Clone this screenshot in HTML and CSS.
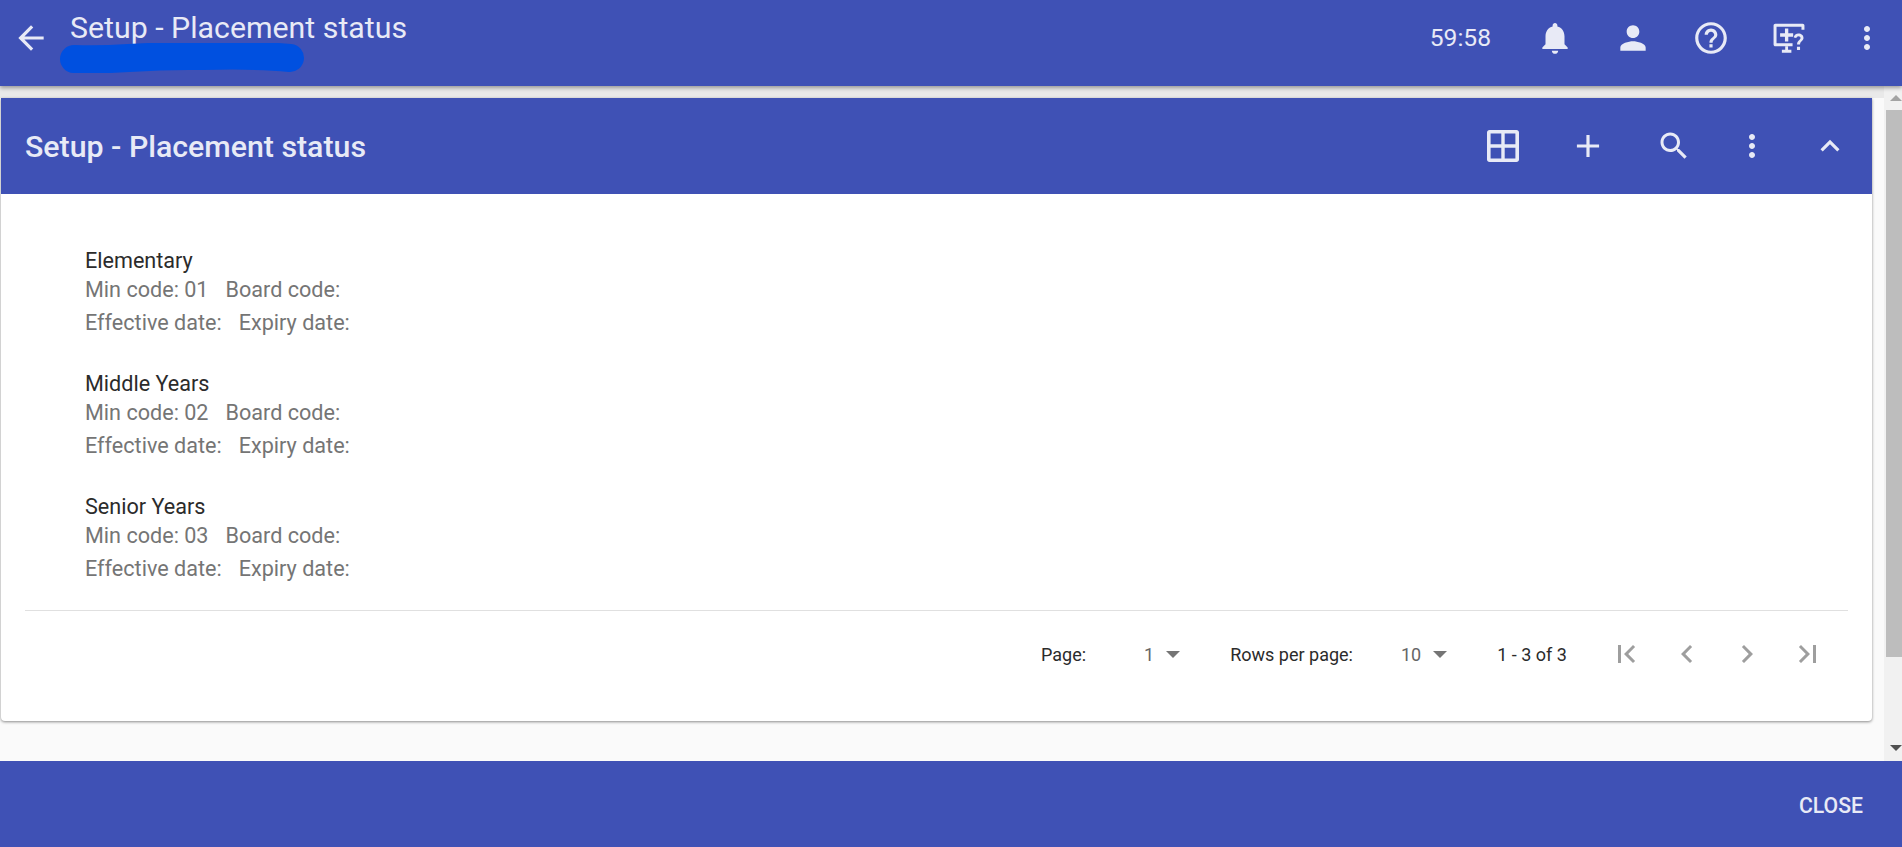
FILE: index.html
```html
<!DOCTYPE html>
<html lang="en">
<head>
  <meta charset="UTF-8">
  <meta name="viewport" content="width=device-width, initial-scale=1.0">
  <title>Setup - Placement status</title>
  <link rel="stylesheet" href="styles.css">
</head>
<body>
  <header class="app-bar">
    <button class="icon-btn back-btn" aria-label="Back">
      <svg viewBox="0 0 24 24" width="38" height="38"><path d="M20 11H7.830l5.590-5.590L12 4l-8 8 8 8 1.410-1.410L7.830 13H20v-2z"/></svg>
    </button>
    <div class="app-titles">
      <h1 class="app-title">Setup - Placement status</h1>
      <svg class="scribble" viewBox="0 0 246 30" width="246" height="30"><path d="M15 16 C60 18 70 13 130 13 C170 13 190 11 231 15" fill="none" stroke="#0050e0" stroke-width="28" stroke-linecap="round"/></svg>
    </div>
    <div class="app-actions">
      <span class="timer">59:58</span>
      <button class="icon-btn" aria-label="Notifications">
        <svg viewBox="0 0 24 24" width="38" height="38"><path d="M12 22c1.100 0 2-.9 2-2h-4c0 1.100.9 2 2 2zm6-6v-5c0-3.070-1.630-5.640-4.500-6.320V4c0-.83-.67-1.500-1.500-1.500s-1.500.67-1.500 1.500v.68C7.640 5.360 6 7.920 6 11v5l-2 2v1h16v-1l-2-2z"/></svg>
      </button>
      <button class="icon-btn" aria-label="Account">
        <svg viewBox="0 0 24 24" width="38" height="38"><path d="M12 12c2.210 0 4-1.790 4-4s-1.790-4-4-4-4 1.790-4 4 1.790 4 4 4zm0 2c-2.670 0-8 1.340-8 4v2h16v-2c0-2.660-5.330-4-8-4z"/></svg>
      </button>
      <button class="icon-btn" aria-label="Help">
        <svg viewBox="0 0 24 24" width="38" height="38"><path d="M11 18h2v-2h-2v2zm1-16C6.480 2 2 6.480 2 12s4.480 10 10 10 10-4.480 10-10S17.520 2 12 2zm0 18c-4.410 0-8-3.590-8-8s3.590-8 8-8 8 3.590 8 8-3.590 8-8 8zm0-14c-2.210 0-4 1.790-4 4h2c0-1.100.9-2 2-2s2 .9 2 2c0 2-3 1.750-3 5h2c0-2.250 3-2.500 3-5 0-2.210-1.790-4-4-4z"/></svg>
      </button>
      <button class="icon-btn" aria-label="Support">
        <svg viewBox="0 0 32 32" width="38" height="38">
          <path d="M3 5.500C3 4.700 3.700 4 4.500 4H27.500C28.300 4 29 4.700 29 5.500V9H26.500V6.500H5.500V20.500H19V23H4.500C3.700 23 3 22.300 3 21.500Z"/>
          <path d="M10 25.800H18V28.500H10ZM12.800 23H15.200V26H12.800Z"/>
          <path d="M12.600 8H15.400V12.100H19.500V14.900H15.400V19H12.600V14.900H8.500V12.100H12.600Z"/>
          <path d="M20 15.500C20.300 13.500 22 12.300 24 12.300C26.300 12.300 28.200 13.800 28.200 16C28.200 18.600 25.300 18.700 25.300 21.500H22.800C22.800 17.900 25.700 17.800 25.700 16C25.700 15.100 25 14.500 24 14.500C23 14.500 22.400 15.100 22.200 16ZM22.700 23.300H25.300V26H22.700Z"/>
        </svg>
      </button>
      <button class="icon-btn" aria-label="More">
        <svg viewBox="0 0 24 24" width="36" height="36"><path d="M12 8c1.100 0 2-.9 2-2s-.9-2-2-2-2 .9-2 2 .9 2 2 2zm0 2c-1.100 0-2 .9-2 2s.9 2 2 2 2-.9 2-2-.9-2-2-2zm0 6c-1.100 0-2 .9-2 2s.9 2 2 2 2-.9 2-2-.9-2-2-2z"/></svg>
      </button>
    </div>
  </header>

  <div class="page">
    <main class="content">
      <section class="card">
        <div class="card-head">
          <h2 class="card-title">Setup - Placement status</h2>
          <div class="card-actions">
            <button class="icon-btn columns-btn" aria-label="Columns">
              <svg viewBox="0 0 32 32" width="32" height="32"><path fill-rule="evenodd" d="M2.500 0H29.500C30.900 0 32 1.100 32 2.500V29.500C32 30.900 30.900 32 29.500 32H2.500C1.100 32 0 30.900 0 29.500V2.500C0 1.100 1.100 0 2.500 0ZM3.600 3.600V14.300H14.300V3.600ZM17.700 3.600V14.300H28.400V3.600ZM3.600 17.700V28.400H14.300V17.700ZM17.700 17.700V28.400H28.400V17.700Z"/></svg>
            </button>
            <button class="icon-btn add-btn" aria-label="Add">
              <svg viewBox="0 0 24 24" width="38" height="38"><path d="M19 13h-6v6h-2v-6H5v-2h6V5h2v6h6v2z"/></svg>
            </button>
            <button class="icon-btn" aria-label="Search">
              <svg viewBox="0 0 24 24" width="36" height="36"><path d="M15.500 14h-.79l-.28-.27C15.410 12.590 16 11.110 16 9.500 16 5.910 13.090 3 9.500 3S3 5.910 3 9.500 5.910 16 9.500 16c1.610 0 3.090-.59 4.230-1.570l.27.28v.79l5 4.990L20.490 19l-4.990-5zm-6 0C7.010 14 5 11.990 5 9.500S7.010 5 9.500 5 14 7.010 14 9.500 11.990 14 9.500 14z"/></svg>
            </button>
            <button class="icon-btn" aria-label="More">
              <svg viewBox="0 0 24 24" width="36" height="36"><path d="M12 8c1.100 0 2-.9 2-2s-.9-2-2-2-2 .9-2 2 .9 2 2 2zm0 2c-1.100 0-2 .9-2 2s.9 2 2 2 2-.9 2-2-.9-2-2-2zm0 6c-1.100 0-2 .9-2 2s.9 2 2 2 2-.9 2-2-.9-2-2-2z"/></svg>
            </button>
            <button class="icon-btn" aria-label="Collapse">
              <svg viewBox="0 0 24 24" width="38" height="38"><path d="M12 8l-6 6 1.410 1.410L12 10.830l4.590 4.580L18 14z"/></svg>
            </button>
          </div>
        </div>

        <ul class="status-list">
          <li class="status-item">
            <div class="status-name">Elementary</div>
            <div class="status-line"><span>Min code: 01</span><span>Board code:</span></div>
            <div class="status-line"><span>Effective date:</span><span>Expiry date:</span></div>
          </li>
          <li class="status-item">
            <div class="status-name">Middle Years</div>
            <div class="status-line"><span>Min code: 02</span><span>Board code:</span></div>
            <div class="status-line"><span>Effective date:</span><span>Expiry date:</span></div>
          </li>
          <li class="status-item">
            <div class="status-name">Senior Years</div>
            <div class="status-line"><span>Min code: 03</span><span>Board code:</span></div>
            <div class="status-line"><span>Effective date:</span><span>Expiry date:</span></div>
          </li>
        </ul>

        <div class="pager">
          <span class="pager-label">Page:</span>
          <span class="pager-select page-select">1<i class="caret"></i></span>
          <span class="pager-label rows-label">Rows per page:</span>
          <span class="pager-select rows-select">10<i class="caret"></i></span>
          <span class="pager-label range">1 - 3 of 3</span>
          <div class="pager-btns">
            <svg viewBox="0 0 24 24" width="36" height="36"><path d="M17.400 16.600L12.800 12l4.600-4.600L16 6l-6 6 6 6zM6 6h2v12H6z"/></svg>
            <svg viewBox="0 0 24 24" width="36" height="36"><path d="M15.410 7.410L14 6l-6 6 6 6 1.410-1.410L10.830 12z"/></svg>
            <svg viewBox="0 0 24 24" width="36" height="36"><path d="M10 6L8.590 7.410 13.170 12l-4.580 4.590L10 18l6-6z"/></svg>
            <svg viewBox="0 0 24 24" width="36" height="36"><path d="M6.600 7.400L11.200 12l-4.600 4.600L8 18l6-6-6-6zM16 6h2v12h-2z"/></svg>
          </div>
        </div>
      </section>
    </main>
    <div class="scrollbar">
      <i class="arrow arrow-up"></i>
      <div class="thumb"></div>
      <i class="arrow arrow-down"></i>
    </div>
  </div>

  <footer class="app-footer">
    <button class="close-btn">CLOSE</button>
  </footer>
</body>
</html>
```

FILE: styles.css
```css
* {
  margin: 0;
  padding: 0;
  box-sizing: border-box;
  font-family: 'Roboto', 'Liberation Sans', sans-serif;
}

body {
  height: 100vh;
  overflow: hidden;
  display: flex;
  flex-direction: column;
  background-color: #fafafa;
}

button {
  background: none;
  border: none;
  cursor: pointer;
  color: inherit;
}

.icon-btn {
  display: flex;
  align-items: center;
  justify-content: center;
  width: 48px;
  height: 48px;
}

.icon-btn svg {
  fill: #e8eaf6;
}

/* Top bar */
.app-bar {
  position: relative;
  z-index: 2;
  flex: 0 0 86px;
  display: flex;
  background-color: #3f51b5;
  color: #e8eaf6;
  box-shadow: 0 2px 4px rgba(0, 0, 0, 0.35);
}

.back-btn {
  margin: 14px 0 0 7px;
}

.app-titles {
  margin-left: 1px;
}

.app-title {
  font-size: 30.3px;
  font-weight: 400;
  line-height: 28px;
  margin: 14px 0 0 14px;
}

.scribble {
  display: block;
  margin: 1px 0 0 3px;
}

.app-actions {
  margin-left: auto;
  padding: 14px 11px 0 0;
  display: flex;
  align-items: flex-start;
  gap: 30px;
}

.timer {
  font-size: 24.6px;
  line-height: 48px;
  margin-right: 10px;
}

/* Card */
.page {
  flex: 1;
  min-height: 0;
  display: flex;
}

.content {
  flex: 1;
  padding: 12px 12px 0 1px;
  background: linear-gradient(#e9e9e9 12px, transparent 12px);
}

.card {
  height: 623px;
  background-color: #fff;
  border-radius: 0 0 4px 4px;
  box-shadow: 0 1px 3px rgba(0, 0, 0, 0.45);
}

.card-head {
  height: 96px;
  display: flex;
  align-items: center;
  padding: 0 18px 0 24px;
  background-color: #3f51b5;
  color: #e8eaf6;
}

.card-title {
  font-size: 30.3px;
  font-weight: 500;
}

.card-actions {
  margin-left: auto;
  display: flex;
  gap: 30px;
}

.columns-btn {
  margin-right: 7px;
}

.add-btn {
  margin-right: 8px;
}

.status-list {
  list-style: none;
  margin: 0 24px;
  padding: 54px 0 25px 60px;
  border-bottom: 1px solid #e0e0e0;
}

.status-item {
  margin-bottom: 32px;
}

.status-item:last-child {
  margin-bottom: 0;
}

.status-name {
  font-size: 21.6px;
  line-height: 25px;
  color: #2b2b2b;
}

.status-line {
  font-size: 21.6px;
  line-height: 33px;
  color: #757575;
  display: flex;
  gap: 17px;
}

/* Pagination */
.pager {
  display: flex;
  align-items: center;
  height: 86px;
  padding-left: 1040px;
  font-size: 18px;
  color: #2b2b2b;
}

.pager-select {
  display: flex;
  align-items: center;
  color: #666;
}

.caret {
  width: 0;
  height: 0;
  margin-left: 12px;
  border-left: 7px solid transparent;
  border-right: 7px solid transparent;
  border-top: 7px solid #757575;
}

.page-select {
  margin-left: 58px;
}

.rows-label {
  margin-left: 50px;
}

.rows-select {
  margin-left: 48px;
}

.range {
  margin-left: 50px;
}

.pager-btns {
  display: flex;
  gap: 24px;
  margin-left: 42px;
}

.pager-btns svg {
  fill: #9e9e9e;
}

/* Scrollbar */
.scrollbar {
  flex: 0 0 18px;
  display: flex;
  flex-direction: column;
  padding-left: 2px;
  background-color: #f1f1f1;
}

.thumb {
  width: 16px;
  height: 547px;
  margin-top: 9px;
  background-color: #bdbdbd;
}

.arrow {
  width: 0;
  height: 0;
  margin-left: 4px;
  border-left: 6px solid transparent;
  border-right: 6px solid transparent;
}

.arrow-up {
  margin-top: 9px;
  border-bottom: 6px solid #a3a3a3;
}

.arrow-down {
  margin-top: auto;
  margin-bottom: 10px;
  border-top: 6px solid #505050;
}

/* Footer */
.app-footer {
  flex: 0 0 86px;
  display: flex;
  align-items: center;
  justify-content: flex-end;
  padding: 3px 39px 0 0;
  background-color: #3f51b5;
}

.close-btn {
  font-size: 21.2px;
  font-weight: 500;
  color: #e8eaf6;
}
```
